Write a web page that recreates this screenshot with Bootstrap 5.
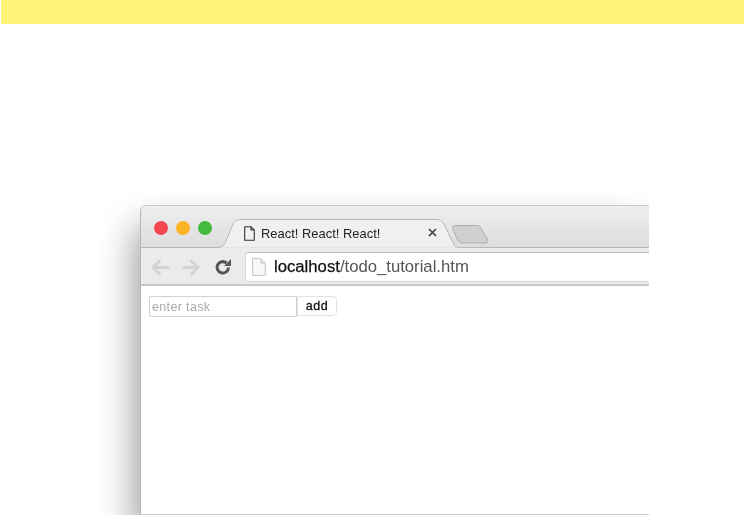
<!DOCTYPE html>
<html lang="en">
<head>
<meta charset="utf-8">
<title>React! React! React!</title>
<link rel="stylesheet" href="https://cdn.jsdelivr.net/npm/bootstrap@5.3.0/dist/css/bootstrap.min.css">
<style>
html,body{width:745px;height:515px;overflow:hidden;background:#fff;font-family:"Liberation Sans",Arial,sans-serif}
.top-strip{height:24px;margin-left:1px;margin-right:1px;background:#fff57d}
.stage{padding-top:181px;padding-left:140px;width:649px}
.win{height:310px;border:1px solid #c9c9c9;border-left-color:#b5b5b5;border-right:0;border-radius:6px 0 0 0;box-shadow:-5px 22px 36px rgba(0,0,0,.4);clip-path:inset(-40px 0 0 -40px);background:#fff;overflow:hidden}
.soft{filter:blur(.4px)}
.tabbar{height:42px;position:relative;background:linear-gradient(#eeeeee,#dddddd);padding-left:13px}
.tab-shape{position:absolute;left:0;top:0;width:508px;height:42px}
.dot{width:14px;height:14px;border-radius:50%;flex:none}
.dot-r{background:#f4474f}
.dot-y{background:#fdb423}
.dot-g{background:#44bb3c}
.dots{gap:8px;padding-top:15px;position:relative}
.tab-label{position:absolute;left:103px;top:0;width:205px;height:42px;padding-top:20px;font-size:12.95px;line-height:15px;color:#222;gap:6px}
.tab-x{position:absolute;left:287px;top:22px;width:9px;height:9px}
.toolbar{height:38px;background:#ebebeb;border-bottom:2px solid #c9c9c9;padding-left:9px;padding-top:2px}
.navicon{flex:none;display:block}
.ico-fwd{margin-left:12px}
.ico-rel{margin-left:14px}
.urlbox{flex:1;height:30px;margin-left:14px;background:#fff;border:1px solid #d8d8d8;border-top-color:#bdbdbd;border-right:0;border-radius:3px 0 0 3px;padding-left:6px;gap:8px;font-size:16.7px;color:#555}
.urlbox b{font-weight:400;color:#111;-webkit-text-stroke:.25px #111}
.pagebody{padding:10px 0 0 8px}
.task-input{width:148px;height:21px;border:1px solid #d2d2d2;border-radius:1px;padding:1px 2px 0;font-size:12.5px;color:#aaa;line-height:19px;letter-spacing:.35px}
.task-add{width:40px;height:20px;padding:1px 0 0;background:#fff;border:1px solid #e3e3e3;border-radius:0 4px 4px 0;font-size:12.5px;line-height:17px;color:#111;letter-spacing:.5px;text-align:center;font-weight:400;-webkit-text-stroke:.3px #111}
</style>
</head>
<body>
<div class="top-strip"></div>
<div class="stage">
  <div class="win">
    <div class="tabbar soft">
      <svg class="tab-shape" viewBox="0 0 508 42" aria-hidden="true">
        <path d="M77 41.500C82 41.500 83 39 85 35L92 18C94 14.500 96 13.500 101 13.500H295C299 13.500 301 15 303 18L311 35C313 40 315 41.500 319 41.500" fill="#f0f0f0" stroke="#b8b8b8"/>
        <path d="M0 41.500H77M319 41.500H508" stroke="#b8b8b8" fill="none"/>
        <path d="M311.500 22.500C311 20 312.500 19.500 315 19.500H335C338 19.500 339.500 20.500 340.500 23L346.500 33.500C347.500 36.500 346.500 37 343 37H322C319 37 317.500 36 316.500 33.500Z" fill="#d0d0d0" stroke="#adadad"/>
      </svg>
      <div class="dots d-flex">
        <span class="dot dot-r"></span><span class="dot dot-y"></span><span class="dot dot-g"></span>
      </div>
      <div class="tab-label d-flex align-items-start">
        <svg width="11" height="15" viewBox="0 0 11 15" aria-hidden="true" style="flex:none"><path d="M.7 .7H7L10.300 4V14.300H.7Z M7 .7V4H10.300" fill="none" stroke="#333" stroke-width="1.100"/></svg>
        <span class="text-nowrap">React! React! React!</span>
      </div>
      <svg class="tab-x" viewBox="0 0 9 9" aria-hidden="true"><path d="M1 1L8 8M8 1L1 8" stroke="#444" stroke-width="1.700"/></svg>
    </div>
    <div class="toolbar soft d-flex align-items-center">
      <svg class="navicon" width="20" height="17" viewBox="0 0 20 17" aria-hidden="true"><path d="M18.500 8.500H3M9.500 2L3 8.500L9.500 15" fill="none" stroke="#d3d3d3" stroke-width="3" stroke-linejoin="round" stroke-linecap="round"/></svg>
      <svg class="navicon ico-fwd" width="19" height="17" viewBox="0 0 19 17" aria-hidden="true"><path d="M1.500 8.500H16M9.500 2L16 8.500L9.500 15" fill="none" stroke="#d3d3d3" stroke-width="3" stroke-linejoin="round" stroke-linecap="round"/></svg>
      <svg class="navicon ico-rel" width="16" height="17" viewBox="0 0 16 17" aria-hidden="true"><path d="M13.500 8.500A5.700 5.700 0 1 1 11.500 4" fill="none" stroke="#555" stroke-width="3"/><path d="M9 7H16V0Z" fill="#555"/></svg>
      <div class="urlbox d-flex align-items-center">
        <svg width="14" height="18" viewBox="0 0 14 18" aria-hidden="true" style="flex:none"><path d="M.6 .6H9L13.400 5V17.400H.6Z" fill="#f7f7f7" stroke="#c4c4c4"/><path d="M9 .6V5H13.400" fill="#e8e8e8" stroke="#c4c4c4"/></svg>
        <span class="text-nowrap"><b>localhost</b>/todo_tutorial.htm</span>
      </div>
    </div>
    <div class="pagebody soft d-flex align-items-start">
      <div class="task-input">enter task</div>
      <button type="button" class="btn task-add">add</button>
    </div>
  </div>
</div>
</body>
</html>
